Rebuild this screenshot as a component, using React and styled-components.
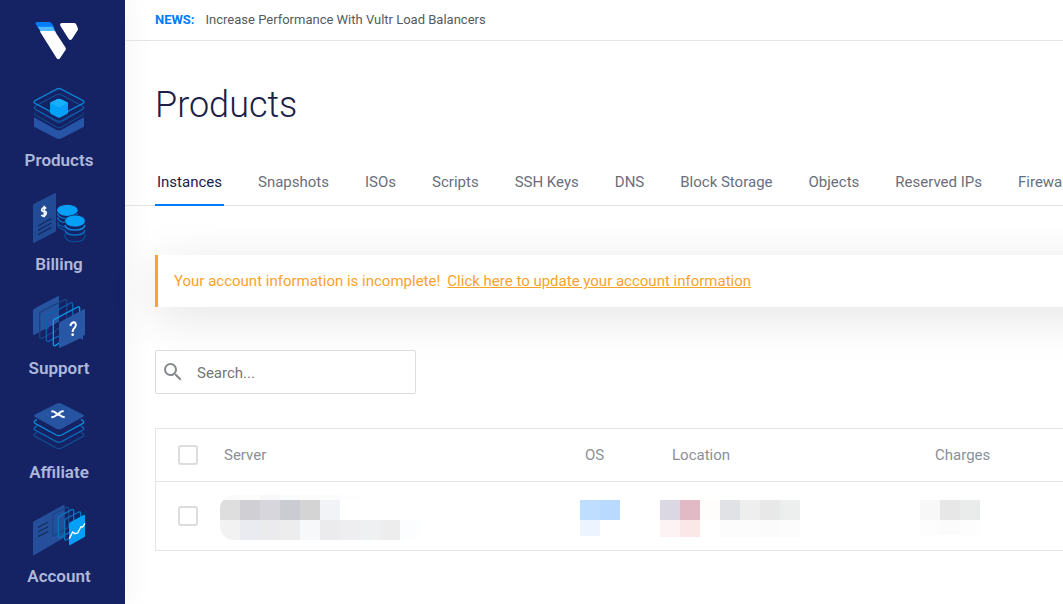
import React from "react";
import styled, { createGlobalStyle } from "styled-components";

const Global = createGlobalStyle`
  * { box-sizing: border-box; }
  body {
    margin: 0;
    background: #fff;
    font-family: Roboto, "Liberation Sans", sans-serif;
    font-size: 15px;
    color: #5f6473;
    overflow-x: hidden;
  }
`;

const Page = styled.div`
  display: flex;
  min-height: 100vh;
  overflow: hidden;
`;

const Sidebar = styled.aside`
  flex: 0 0 125px;
  display: flex;
  flex-direction: column;
  align-items: center;
  padding: 21px 7px 0 0;
  background: #152364;
  box-shadow: 0 0 30px rgba(0, 0, 0, 0.06);
`;

const LogoLink = styled.a`
  display: block;
  height: 39px;
  margin-bottom: 25px;
`;

const Menu = styled.nav`
  display: flex;
  flex-direction: column;
  gap: 17px;
`;

const MenuLink = styled.a`
  display: flex;
  flex-direction: column;
  align-items: center;
  gap: 7px;
  color: #b0b8da;
  font-size: 17px;
  font-weight: 600;
  line-height: 24px;
  text-decoration: none;
`;

const Icon = styled.svg`
  display: block;
  width: 58px;
  height: 56px;
  fill: none;
`;

const Main = styled.main`
  flex: 1;
  min-width: 0;
`;

const News = styled.header`
  display: flex;
  gap: 11px;
  padding: 0 30px;
  border-bottom: 1px solid #e4e5e8;
  font-size: 13px;
  line-height: 40px;
  color: #555a60;
  white-space: nowrap;
`;

const NewsTag = styled.strong`
  color: #007bfc;
`;

const Title = styled.h1`
  margin: 40px 30px 0;
  font-size: 36px;
  font-weight: 300;
  line-height: 48px;
  color: #1a2147;
`;

const Tabs = styled.nav`
  display: flex;
  gap: 32px;
  margin-top: 41px;
  padding-left: 30px;
  overflow: hidden;
  box-shadow: inset 0 -1px #e2e3e6;
`;

const Tab = styled.a`
  padding: 0 2px 10px;
  border-bottom: 2px solid ${(p) => (p.$active ? "#007bfc" : "transparent")};
  color: ${(p) => (p.$active ? "#1a2147" : "#6a6e7c")};
  line-height: 24px;
  text-decoration: none;
  white-space: nowrap;
`;

const Content = styled.section`
  margin-right: -60px;
  padding: 49px 0 30px 30px;
`;

const Alert = styled.div`
  display: flex;
  gap: 7px;
  padding-left: 16px;
  border-left: 3px solid #faa32a;
  background: #fff;
  box-shadow: 0 10px 50px rgba(0, 10, 10, 0.11);
  color: #faa32a;
  line-height: 52px;
  white-space: nowrap;
`;

const AlertLink = styled.a`
  color: inherit;
`;

const SearchBox = styled.label`
  position: relative;
  display: flex;
  align-items: center;
  gap: 10px;
  width: 261px;
  height: 44px;
  margin: 43px 0 34px;
  padding: 0 5px;
  border: 1px solid #dcdde0;
  border-radius: 2px;
  background: #fff;
`;

const SearchIcon = styled.svg`
  width: 24px;
  height: 24px;
  fill: #85888d;
`;

const SearchInput = styled.input`
  flex: 1;
  min-width: 0;
  padding: 2px 2px 0;
  border: 0;
  outline: 0;
  background: none;
  font: inherit;
  color: #333;
  &::placeholder { color: #757575; opacity: 1; }
`;

const Table = styled.table`
  width: 100%;
  table-layout: fixed;
  border-collapse: separate;
  border-spacing: 0;
  border: 1px solid #e4e5e8;
  border-right: 0;
`;

const Col = styled.col`
  width: ${(p) => p.$width};
`;

const HeadCell = styled.th`
  height: 53px;
  padding: 0 0 0 ${(p) => p.$inset}px;
  border-bottom: 1px solid #e4e5e8;
  font-weight: 400;
  text-align: left;
  color: #8b8f98;
`;

const Cell = styled.td`
  height: 68px;
  padding: ${(p) => (p.$check ? "0 0 0 22px" : "13px 0 0")};
  vertical-align: ${(p) => (p.$check ? "middle" : "top")};
`;

const Check = styled.input`
  appearance: none;
  display: block;
  width: 20px;
  height: 20px;
  margin: 0;
  border: 2px solid #dcdddf;
  border-radius: 3px;
  background: #fff;
`;

const Mosaic = styled.div`
  display: grid;
  grid-template-columns: repeat(${(p) => p.$cols}, 20px);
  grid-template-rows: 5px 20px ${(p) => p.$last}px;
  width: max-content;
  border-radius: ${(p) => p.$radius || 0}px;
  overflow: hidden;
`;

const Tile = styled.span`
  background: ${(p) => p.$color};
`;

const c = "transparent";
const blocks = [
  {
    cols: 10,
    last: 20,
    radius: 14,
    tiles: [
      "#fafafa", "#fcfcfc", "#f8f8f8", "#fbfbfb", "#fbfbfb", "#fcfcfc", "#fdfdfd", c, c, c,
      "#dedede", "#d0cfd4", "#d7d6dc", "#cbccd1", "#d4d4d4", "#f1f3f6", c, c, c, c,
      "#f2f2f2", "#e9ebf1", "#ebebee", "#ededed", "#f6f8fa", "#ebebee", "#eeeef0", "#eef0f2", "#ededed", "#fbfdff",
    ],
  },
  {
    cols: 2,
    last: 16,
    tiles: [c, c, "#bfddff", "#bad9ff", "#ebf4ff", c],
  },
  {
    cols: 7,
    last: 17,
    tiles: [
      c, c, c, c, c, c, c,
      "#dbd8e3", "#e2bac6", "#fefdfc", "#e1e2e5", "#eeeeee", "#e8e8e8", "#edefef",
      "#fdf2f4", "#fbe6e8", c, "#fcfcfc", "#fcfcfc", "#fbfbfb", "#fcfcfc",
    ],
  },
  {
    cols: 3,
    last: 15,
    tiles: [c, c, c, "#f8f8f8", "#e7e7e7", "#eaeceb", "#fdfdfd", "#fbfbfb", "#fdfdfd"],
  },
];

const tabs = ["Instances", "Snapshots", "ISOs", "Scripts", "SSH Keys", "DNS", "Block Storage", "Objects", "Reserved IPs", "Firewall"];

function Logo() {
  return (
    <svg width="48" height="39" viewBox="105 63 144 117" aria-hidden="true">
      <path fill="#007bfc" d="M112 66h36q5 0 8 5l8 14h-49l-8-13q-2-6 5-6z" />
      <path fill="#51b9ff" d="M113 80h45l11 18h-45z" />
      <path fill="#fff" d="M122 93h39q3 0 5 3l30 46q3 5 0 9l-16 24q-5 6-10 0l-48-77q-3-5 0-5z" />
      <path fill="#fff" d="M184 69h38q4 0 6 3l5 11q2 4 0 8l-17 26q-5 6-10 0l-25-40q-3-6 3-8z" />
    </svg>
  );
}

function ProductsIcon() {
  const ring = "M105 301l64-34q8-5 16 0l64 34q6 4 0 8l-64 34q-8 5-16 0l-64-34q-6-4 0-8z";
  return (
    <Icon viewBox="90 255 174 168" aria-hidden="true">
      <path fill="#2654a6" d="M102 352l67 37q8 4 16 0l67-37v28l-67 35q-8 4-16 0l-67-35z" />
      <g strokeWidth="3" stroke="#0d5fb0">
        <path stroke="#0e4f94" d="M106 337q-6 4 0 8l63 36q8 5 16 0l63-36q6-4 0-8" />
        <path d="M106 320q-6 4 0 8l63 37q8 5 16 0l63-37q6-4 0-8" />
        <path stroke="#0c78c9" d={ring} transform="translate(0 18)" strokeOpacity="0.6" />
        <path stroke="#0c7fd2" strokeWidth="4" d={ring} transform="translate(0 1)" />
      </g>
      <path fill="#049ff7" d="M150 310q0-3 3-4l19-9q5-2 10 0l19 9q3 1 3 4v28q0 3-3 4l-19 10q-5 3-10 0l-19-10q-3-1-3-4z" />
      <path fill="#18b0fb" d="M151 308l23-11h6l23 11-21 12q-5 2-10 0z" />
    </Icon>
  );
}

function BillingIcon() {
  return (
    <Icon viewBox="90 27 174 168" aria-hidden="true">
      <path fill="#214b95" d="M99 76q0-3 3-5l62-31q4-2 4 2v109q0 3-3 5l-62 32q-4 2-4-2z" />
      <g stroke="#152a62" strokeWidth="4">
        <path d="M114 138l40-22M114 151l40-22M114 164l40-22" />
      </g>
      <path stroke="#fff" strokeWidth="5" d="M138 86q-3-6-8-3-5 3-5 8 1 4 7 3 6-1 7 4 0 6-6 9-6 3-8-3M133 77v35" />
      <g strokeWidth="4">
        <path stroke="#0b559f" d="M172 126q4 14 29 16M172 134q4 15 29 17" />
        <path stroke="#0878ca" d="M172 100q3 15 30 16 27-1 30-16M172 112q4 15 28 16" />
        <path fill="#152364" stroke="none" d="M195 125v31q3 15 30 15t30-15v-31z" />
        <path stroke="#0c8ce1" d="M195 135q3 15 30 15t30-15" />
        <path stroke="#0a6fc0" d="M195 150q3 15 30 15t30-15" />
        <path stroke="#0b4a8f" d="M195 161v9q3 15 30 15t30-15v-9" />
      </g>
      <ellipse cx="202" cy="91" rx="31" ry="17" fill="#049ff7" />
      <ellipse cx="225" cy="123" rx="31" ry="18" fill="#049ff7" stroke="#152364" strokeWidth="2" />
    </Icon>
  );
}

function SupportIcon() {
  return (
    <Icon viewBox="90 339 174 168" aria-hidden="true">
      <path fill="#2654a1" d="M99 391q0-3 3-5l71-37q4-2 4 2v74l-30 16-2 6-8-1-34 18q-4 2-4-2z" />
      <g strokeWidth="4">
        <path stroke="#17417f" d="M119 402q0-4 3-6l72-37q5-2 6 3v69l-31 18-8 12-6-2-29 16q-7 2-7-5z" />
        <path stroke="#0a60ad" d="M139 412q0-4 3-6l70-37q6-2 6 3v69l-31 18-8 12-6-2-27 15q-7 2-7-5z" />
        <path stroke="#079be9" d="M160 424q0-4 3-6l70-37q6-2 6 3v69l-45 25-28 19q-6 2-6-5z" />
      </g>
      <path fill="#2857a5" d="M177 432q0-4 3-6l71-38q4-2 4 2v74l-6 4v12l-8-5-60 28q-4 2-4-2z" />
      <path stroke="#fff" strokeWidth="6" d="M211 438q2-9 10-11 8 0 6 10-2 7-7 11-2 3-2 8" />
      <circle cx="218" cy="464" r="4" fill="#fff" />
    </Icon>
  );
}

function AffiliateIcon() {
  const layer = "M111 118l-6 4q-5 4 0 8l64 35q8 4 16 0l64-35q5-4 0-8l-6-4";
  return (
    <Icon viewBox="90 51 174 168" aria-hidden="true">
      <g strokeWidth="4">
        <path stroke="#0e4d90" d={layer} transform="translate(0 39)" />
        <path stroke="#0b6ab7" d={layer} transform="translate(0 20)" />
        <path stroke="#0a8bdc" d={layer} />
      </g>
      <path fill="#2654a1" d="M104 104l65-33q8-4 16 0l65 33q4 3 0 6l-65 36q-8 4-16 0l-65-36q-4-3 0-6z" />
      <path stroke="#fff" strokeWidth="6" d="M154 94q9 0 14 5l12 7q6 5 14 6M191 93q-8 1-13 6l-10 7q-5 5-14 6" />
    </Icon>
  );
}

function AccountIcon() {
  return (
    <Icon viewBox="90 363 174 168" aria-hidden="true">
      <path fill="#254f9b" d="M99 429q0-3 3-5l88-49q4-2 4 2v92q0 3-3 5l-88 51q-4 2-4-2z" />
      <path stroke="#15305f" strokeWidth="4" d="M114 442l31-16M114 456l31-16M114 470l31-16" />
      <g strokeWidth="4">
        <path stroke="#17488a" d="M158 408q0-4 3-6l39-20q6-2 6 3v57l-43 24q-5 2-5-4z" />
        <path stroke="#0973bd" d="M175 415q0-4 3-6l37-20q6-2 6 3v58l-41 23q-5 2-5-4z" />
        <path stroke="#0973bd" d="M194 423q0-4 3-6l39-21q6-2 6 3v57l-43 24q-5 2-5-4z" />
      </g>
      <path fill="#049ff7" d="M207 432q0-3 3-5l41-22q4-2 4 2v60q0 3-3 5l-41 23q-4 2-4-2z" />
      <path stroke="#fff" strokeWidth="4" d="M208 476l10-20 7 5 8-2 10-19 5 1 7-11" />
    </Icon>
  );
}

const menu = [
  ["Products", ProductsIcon],
  ["Billing", BillingIcon],
  ["Support", SupportIcon],
  ["Affiliate", AffiliateIcon],
  ["Account", AccountIcon],
];

export default function App() {
  return (
    <>
      <Global />
      <Page>
        <Sidebar>
          <LogoLink href="#" aria-label="Home">
            <Logo />
          </LogoLink>
          <Menu>
            {menu.map(([label, Glyph]) => (
              <MenuLink href="#" key={label}>
                <Glyph />
                {label}
              </MenuLink>
            ))}
          </Menu>
        </Sidebar>
        <Main>
          <News>
            <NewsTag>NEWS:</NewsTag>
            <span>Increase Performance With Vultr Load Balancers</span>
          </News>
          <Title>Products</Title>
          <Tabs>
            {tabs.map((name, i) => (
              <Tab href="#" key={name} $active={i === 0}>
                {name}
              </Tab>
            ))}
          </Tabs>
          <Content>
            <Alert role="alert">
              <span>Your account information is incomplete!</span>
              <AlertLink href="#">Click here to update your account information</AlertLink>
            </Alert>
            <SearchBox>
              <SearchIcon viewBox="0 0 24 24" aria-hidden="true">
                <path d="M15.5 14h-.79l-.28-.27A6.47 6.47 0 0 0 16 9.500 6.500 6.500 0 1 0 9.500 16c1.610 0 3.090-.59 4.230-1.570l.27.28v.79l5 4.990L20.490 19l-4.990-5zm-6 0C7.010 14 5 11.990 5 9.500S7.010 5 9.500 5 14 7.010 14 9.500 11.990 14 9.500 14z" />
              </SearchIcon>
              <SearchInput type="text" placeholder="Search..." aria-label="Search" />
            </SearchBox>
            <Table>
              <colgroup>
                <Col $width="64px" />
                <Col $width="360px" />
                <Col $width="80px" />
                <Col $width="260px" />
                <Col $width="auto" />
              </colgroup>
              <thead>
                <tr>
                  <HeadCell $inset={22}>
                    <Check type="checkbox" aria-label="Select all servers" />
                  </HeadCell>
                  <HeadCell $inset={4}>Server</HeadCell>
                  <HeadCell $inset={5}>OS</HeadCell>
                  <HeadCell $inset={12}>Location</HeadCell>
                  <HeadCell $inset={15}>Charges</HeadCell>
                </tr>
              </thead>
              <tbody>
                <tr>
                  <Cell $check>
                    <Check type="checkbox" aria-label="Select server" />
                  </Cell>
                  {blocks.map((b, i) => (
                    <Cell key={i}>
                      <Mosaic $cols={b.cols} $last={b.last} $radius={b.radius}>
                        {b.tiles.map((color, j) => (
                          <Tile key={j} $color={color} />
                        ))}
                      </Mosaic>
                    </Cell>
                  ))}
                </tr>
              </tbody>
            </Table>
          </Content>
        </Main>
      </Page>
    </>
  );
}
